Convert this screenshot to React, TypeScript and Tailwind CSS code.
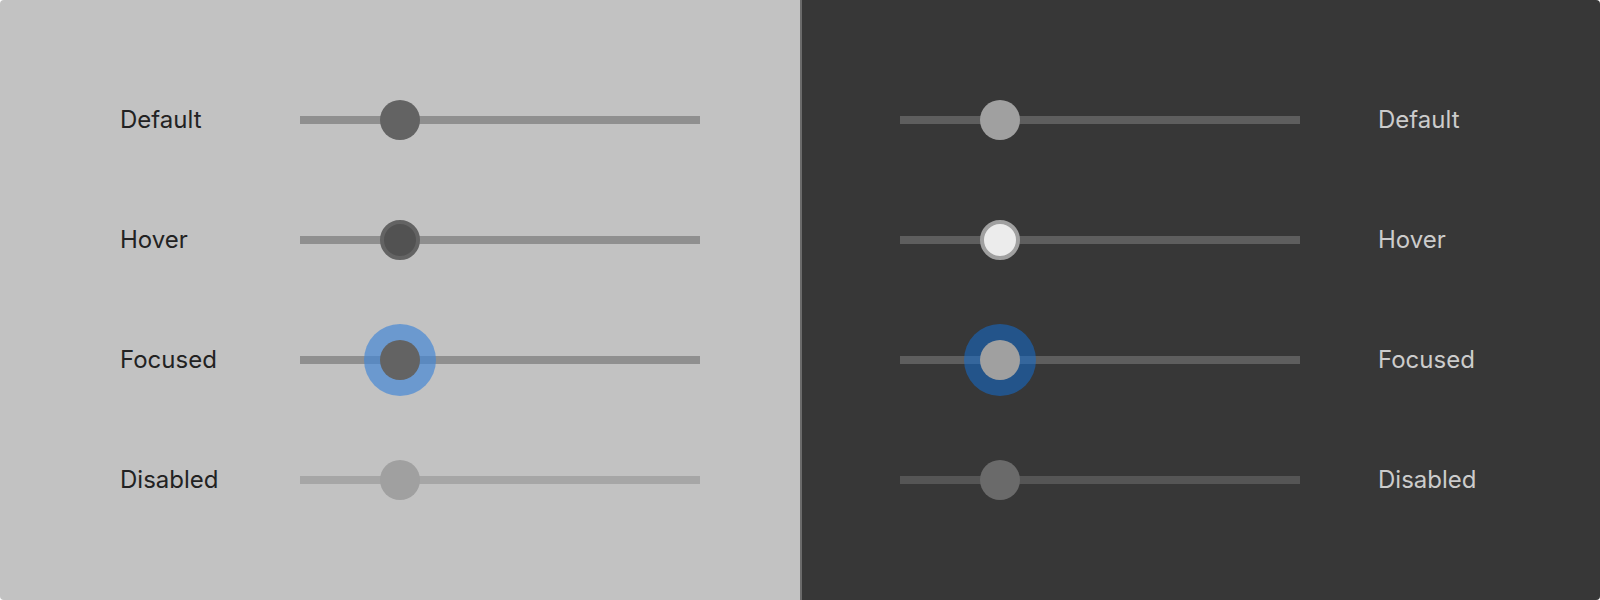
import React from "react";

type Variant = "default" | "hover" | "focused" | "disabled";

const rows: { label: string; v: Variant }[] = [
  { label: "Default", v: "default" },
  { label: "Hover", v: "hover" },
  { label: "Focused", v: "focused" },
  { label: "Disabled", v: "disabled" },
];

function Slider({ v, dark }: { v: Variant; dark: boolean }) {
  const track = v === "disabled"
    ? dark ? "bg-[#555555]" : "bg-[#a6a6a6]"
    : dark ? "bg-[#5e5e5e]" : "bg-[#8f8f8f]";

  let thumb = "";
  if (dark) {
    if (v === "default" || v === "focused") thumb = "bg-[#a0a0a0]";
    if (v === "hover") thumb = "bg-[#ececec] border-4 border-[#a0a0a0]";
    if (v === "disabled") thumb = "bg-[#6a6a6a]";
  } else {
    if (v === "default" || v === "focused") thumb = "bg-[#636363]";
    if (v === "hover") thumb = "bg-[#525252] border-4 border-[#636363]";
    if (v === "disabled") thumb = "bg-[#a0a0a0]";
  }

  return (
    <div className={`relative w-[400px] h-2 ${track}`}>
      {v === "focused" && (
        <div
          className={`absolute left-[64px] top-[-32px] w-[72px] h-[72px] rounded-full ${
            dark ? "bg-[rgba(20,110,208,0.55)]" : "bg-[rgba(67,134,214,0.68)]"
          }`}
        />
      )}
      <div className={`absolute left-[80px] top-[-16px] w-10 h-10 rounded-full box-border ${thumb}`} />
    </div>
  );
}

export default function App() {
  const font = { fontFamily: "Inter, 'Noto Sans', sans-serif" };
  return (
    <div className="w-[1600px] h-[600px] flex bg-white" style={font}>
      <div className="w-[800px] h-full bg-[#c2c2c2] rounded-l-[4px] pt-[60px]">
        {rows.map((r) => (
          <div key={r.label} className="h-[120px] flex items-center pl-[120px]">
            <span className="w-[180px] text-[24px] leading-none text-[#222222]">{r.label}</span>
            <Slider v={r.v} dark={false} />
          </div>
        ))}
      </div>
      <div className="w-[800px] h-full bg-[#373737] rounded-r-[4px] border-l-2 border-[#6a6a6a] pt-[60px]">
        {rows.map((r) => (
          <div key={r.label} className="h-[120px] flex items-center pl-[98px]">
            <Slider v={r.v} dark={true} />
            <span className="ml-[78px] text-[24px] leading-none text-[#cccccc]">{r.label}</span>
          </div>
        ))}
      </div>
    </div>
  );
}
